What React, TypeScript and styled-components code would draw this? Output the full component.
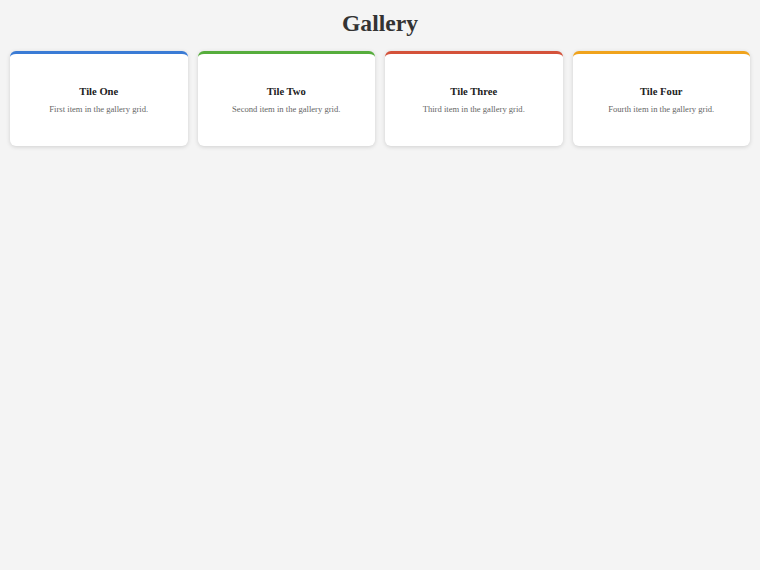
import styled, { createGlobalStyle } from "styled-components";

const GlobalStyle = createGlobalStyle`
    body {
        margin: 0;
        background-color: #f4f4f4;
        font-family: "Liberation Serif", "Times New Roman", serif;
        color: #333;
    }
`;

const tiles = [
    { title: "Tile One", text: "First item in the gallery grid.", color: "#3a7bd5" },
    { title: "Tile Two", text: "Second item in the gallery grid.", color: "#56ad3c" },
    { title: "Tile Three", text: "Third item in the gallery grid.", color: "#d4523a" },
    { title: "Tile Four", text: "Fourth item in the gallery grid.", color: "#f0a31c" },
];

function App() {
    return (
        <Wrapper>
            <GlobalStyle />
            <Title>Gallery</Title>
            <Grid>
                {tiles.map((t) => (
                    <Tile key={t.title} $accent={t.color}>
                        <TileTitle>{t.title}</TileTitle>
                        <TileText>{t.text}</TileText>
                    </Tile>
                ))}
            </Grid>
        </Wrapper>
    );
}

const Wrapper = styled.div`
    padding: 9px 10px 10px;
`;
const Title = styled.h1`
    margin: 0 0 14px;
    font-size: 23.6px;
    line-height: 28px;
    text-align: center;
    color: #333;
`;
const Grid = styled.div`
    display: grid;
    grid-template-columns: repeat(4, 1fr);
    gap: 10px;
`;
const Tile = styled.div<{ $accent: string }>`
    background-color: #fff;
    border-top: 3px solid ${(p) => p.$accent};
    border-radius: 6px;
    box-shadow: 0 1px 4px rgba(0, 0, 0, 0.15);
    height: 92px;
    display: flex;
    flex-direction: column;
    align-items: center;
    justify-content: center;
    text-align: center;
`;
const TileTitle = styled.h3`
    margin: 0 0 7px;
    font-size: 10.6px;
    font-weight: bold;
    color: #222;
`;
const TileText = styled.p`
    margin: 0;
    font-size: 8.6px;
    color: #666;
`;

export default App;
